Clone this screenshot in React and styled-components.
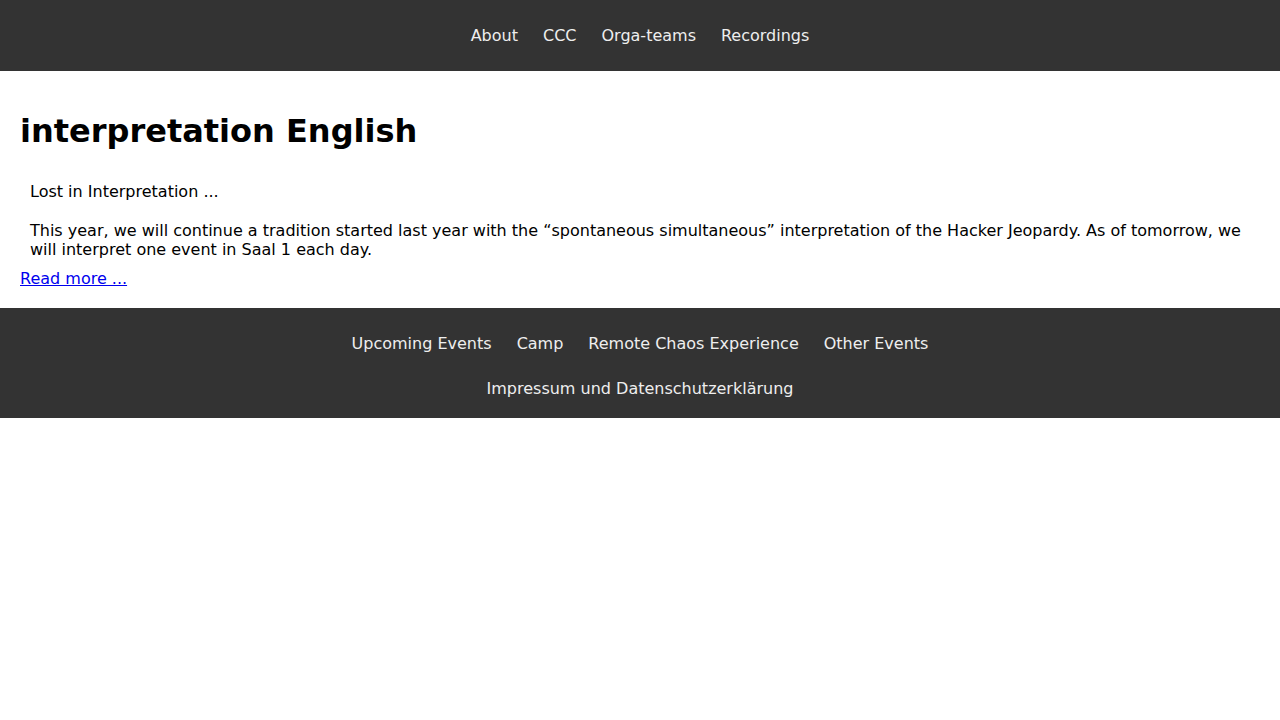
import React from 'react'
import styled, { createGlobalStyle } from 'styled-components'

const Global = createGlobalStyle`
  body {
    margin: 0;
    font-family: "DejaVu Sans", sans-serif;
    font-size: 16px;
    background: #fff;
    color: #000;
  }
`

const Header = styled.header`
  height: 71px;
  background: #333;
  display: flex;
  align-items: center;
  justify-content: center;
`
const Nav = styled.nav`
  display: flex;
  gap: 25px;
  justify-content: center;
`
const NavLink = styled.a`
  color: #eee;
  text-decoration: none;
  line-height: 19px;
`
const Main = styled.main`
  padding: 20px 20px 20px;
`
const Title = styled.h1`
  font-size: 32px;
  font-weight: bold;
  margin: 21.5px 0 22.5px;
  line-height: 37px;
`
const Summary = styled.div`
  padding: 10px;
`
const Para = styled.p`
  margin: 0;
  line-height: 19px;
  & + & {
    margin-top: 20px;
  }
`
const More = styled.a`
  color: #0000ee;
  text-decoration: underline;
  line-height: 19px;
`
const Footer = styled.footer`
  background: #333;
  padding: 26px 0 20px;
  display: flex;
  flex-direction: column;
  gap: 26px;
`

const App = () => (
  <>
    <Global />
    <Header>
      <Nav>
        <NavLink href="#">About</NavLink>
        <NavLink href="#">CCC</NavLink>
        <NavLink href="#">Orga-teams</NavLink>
        <NavLink href="#">Recordings</NavLink>
      </Nav>
    </Header>
    <Main>
      <Title>interpretation English</Title>
      <Summary>
        <Para>Lost in Interpretation ...</Para>
        <Para>
          This year, we will continue a tradition started last year with the “spontaneous simultaneous” interpretation of the Hacker Jeopardy. As of tomorrow, we will interpret one event in Saal 1 each day.
        </Para>
      </Summary>
      <More href="#">Read more ...</More>
    </Main>
    <Footer>
      <Nav>
        <NavLink href="#">Upcoming Events</NavLink>
        <NavLink href="#">Camp</NavLink>
        <NavLink href="#">Remote Chaos Experience</NavLink>
        <NavLink href="#">Other Events</NavLink>
      </Nav>
      <Nav>
        <NavLink href="#">Impressum und Datenschutzerklärung</NavLink>
      </Nav>
    </Footer>
  </>
)

export default App
